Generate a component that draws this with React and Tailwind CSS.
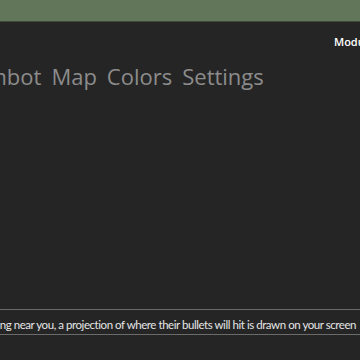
import React from 'react';

const tabs = ['Aimbot', 'Map', 'Colors', 'Settings'];

const App = () => {
  return (
    <div className="w-[360px] h-[360px] overflow-hidden bg-[#252525] flex flex-col" style={{ fontFamily: '"Open Sans", "Noto Sans", sans-serif' }}>
      <div className="h-[22px] bg-[#62765a] border-b border-[#3f4a3a] shrink-0" />
      <div className="flex justify-end pt-[12px] pr-0 h-[20px] box-content">
        <span className="text-[11px] font-semibold text-white leading-[16px] whitespace-nowrap -mr-[14px] w-[40px]">Modules</span>
      </div>
      <div className="flex gap-[10px] ml-[-33px] mt-[8px] whitespace-nowrap">
        {tabs.map(t => (
          <span key={t} className="text-[22px] leading-[28px] text-[#8c8c8c]">{t}</span>
        ))}
      </div>
      <div className="flex-1" />
      <div className="border-t border-[#6b6b6b] mb-[25px]">
        <div className="flex justify-end overflow-hidden whitespace-nowrap border-b border-[#6b6b6b] mt-[6px] pr-[4px]">
          <span className="text-[11.5px] leading-[18px] tracking-[-0.45px] text-[#e6e6e6]" style={{ fontFamily: 'Lato, "Noto Sans", sans-serif' }}>When an enemy is aiming near you, a projection of where their bullets will hit is drawn on your screen</span>
        </div>
      </div>
    </div>
  );
};

export default App;
